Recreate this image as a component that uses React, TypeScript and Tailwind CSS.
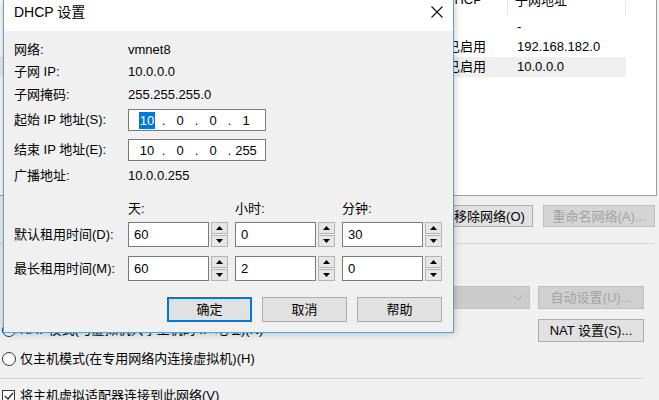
import type { ReactNode } from 'react';

const FONT = "font-['Liberation_Sans','Noto_Sans_CJK_SC',sans-serif]";

function WinButton({ children, className = '', disabled = false, primary = false }: { children: ReactNode; className?: string; disabled?: boolean; primary?: boolean }) {
    const tone = disabled
        ? 'bg-[#cccccc] border border-[#bfbfbf] text-[#8f8f8f]'
        : primary
            ? 'bg-[#e1e1e1] border-2 border-[#0078d7] text-black'
            : 'bg-[#e1e1e1] border border-[#adadad] text-black';
    return (
        <div className={`flex items-center justify-center text-[13px] leading-none ${tone} ${className}`}>
            {children}
        </div>
    );
}

function SpinArrow({ up = false }: { up?: boolean }) {
    return (
        <div className="h-[12px] border border-[#b4b4b4] bg-[#e6e6e6] flex items-center justify-center">
            <svg width="7" height="4" viewBox="0 0 7 4">
                {up ? <path d="M0 4 L3.5 0 L7 4 Z" fill="#000" /> : <path d="M0 0 L3.5 4 L7 0 Z" fill="#000" />}
            </svg>
        </div>
    );
}

function Spinner({ value, className = '' }: { value: string; className?: string }) {
    return (
        <div className={`flex h-[25px] ${className}`}>
            <div className="w-[81px] h-full border border-[#7a7a7a] bg-white pl-[5px] flex items-center text-[13px] leading-none">
                {value}
            </div>
            <div className="ml-[2px] w-[17px] flex flex-col justify-between">
                <SpinArrow up />
                <SpinArrow />
            </div>
        </div>
    );
}

function IpBox({ parts, selectFirst = false }: { parts: string[]; selectFirst?: boolean }) {
    return (
        <div className="w-[138px] h-[22px] border border-[#7a7a7a] bg-white pl-[8px] flex items-center text-[13px] leading-none">
            {parts.map((p, i) => (
                <div key={i} className="flex">
                    {i > 0 && <span className="w-[13px] text-center">.</span>}
                    <span className="w-[20px] flex justify-center">
                        {i === 0 && selectFirst ? (
                            <span className="bg-[#0078d7] text-white px-[1px] py-[2px]">{p}</span>
                        ) : (
                            p
                        )}
                    </span>
                </div>
            ))}
        </div>
    );
}

function Radio() {
    return <div className="w-[14px] h-[14px] rounded-full border border-[#333333] bg-white shrink-0" />;
}

function DhcpDialog() {
    return (
        <div className="absolute left-[3px] top-0 w-[451px] h-[333px] flex flex-col border-x border-b border-[#5fa3c0] shadow-[0_0_8px_rgba(0,0,0,0.25)]">
            {/* title bar */}
            <div className="h-[31px] bg-white flex items-start justify-between pl-[10px] pr-[10px]">
                <div className="h-[24px] flex items-center text-[14px] text-black">DHCP 设置</div>
                <div className="h-[24px] flex items-center">
                    <svg width="12" height="12" viewBox="0 0 12 12">
                        <path d="M0.5 0.5 L11.5 11.5 M11.5 0.5 L0.5 11.5" stroke="#111" strokeWidth="1.1" />
                    </svg>
                </div>
            </div>

            <div className="flex-1 bg-[#f0f0f0] px-[10px] pt-[8px] text-[13px] text-black">
                <div className="h-[22px] flex items-center">
                    <span className="w-[114px]">网络:</span>
                    <span>vmnet8</span>
                </div>
                <div className="h-[22px] flex items-center">
                    <span className="w-[114px]">子网 IP:</span>
                    <span>10.0.0.0</span>
                </div>
                <div className="h-[23px] flex items-center">
                    <span className="w-[114px]">子网掩码:</span>
                    <span>255.255.255.0</span>
                </div>
                <div className="mt-[3px] h-[22px] flex items-center">
                    <span className="w-[114px]">起始 IP 地址(S):</span>
                    <IpBox parts={['10', '0', '0', '1']} selectFirst />
                </div>
                <div className="mt-[8px] h-[22px] flex items-center">
                    <span className="w-[114px]">结束 IP 地址(E):</span>
                    <IpBox parts={['10', '0', '0', '255']} />
                </div>
                <div className="mt-[4px] h-[22px] flex items-center">
                    <span className="w-[114px]">广播地址:</span>
                    <span>10.0.0.255</span>
                </div>

                {/* lease times */}
                <div className="mt-[14px] h-[16px] flex items-center">
                    <span className="w-[114px]" />
                    <span className="w-[107px]">天:</span>
                    <span className="w-[107px]">小时:</span>
                    <span>分钟:</span>
                </div>
                <div className="mt-[5px] flex items-center">
                    <span className="w-[114px]">默认租用时间(D):</span>
                    <Spinner value="60" />
                    <Spinner value="0" className="ml-[7px]" />
                    <Spinner value="30" className="ml-[7px]" />
                </div>
                <div className="mt-[9px] flex items-center">
                    <span className="w-[114px]">最长租用时间(M):</span>
                    <Spinner value="60" />
                    <Spinner value="2" className="ml-[7px]" />
                    <Spinner value="0" className="ml-[7px]" />
                </div>

                <div className="mt-[16px] flex justify-end gap-[10px] pr-[1px]">
                    <WinButton primary className="w-[85px] h-[25px]">确定</WinButton>
                    <WinButton className="w-[85px] h-[25px]">取消</WinButton>
                    <WinButton className="w-[85px] h-[25px]">帮助</WinButton>
                </div>
            </div>
        </div>
    );
}

export default function App() {
    const rows = [
        { dhcp: '-', subnet: '-', selected: false },
        { dhcp: '已启用', subnet: '192.168.182.0', selected: false },
        { dhcp: '已启用', subnet: '10.0.0.0', selected: true },
    ];

    return (
        <div className={`relative w-[659px] h-[400px] overflow-hidden bg-[#f0f0f0] text-black ${FONT}`}>
            {/* network editor window behind */}
            <div className="flex flex-col text-[13px]">
                <div className="w-[657px] h-[196px] bg-white border-r border-b border-[#a0a0a0]">
                    <div className="grid grid-cols-[441px_67px_118px_1fr] h-[15px] overflow-hidden">
                        <div className="border-r border-[#e5e5e5]" />
                        <div className="border-r border-[#e5e5e5] pl-[4px]">
                            <span className="block -mt-[8px] leading-[16px]">DHCP</span>
                        </div>
                        <div className="border-r border-[#e5e5e5] pl-[7px]">
                            <span className="block -mt-[7px] leading-[16px]">子网地址</span>
                        </div>
                        <div />
                    </div>
                    <div className="mt-[2px]">
                        {rows.map((r, i) => (
                            <div key={i} className="grid grid-cols-[441px_67px_118px_1fr] h-[20px] items-center">
                                <div className={`h-full ${r.selected ? 'bg-[#efefef]' : ''}`} />
                                <div className={`h-full flex items-center pl-[6px] ${r.selected ? 'bg-[#efefef]' : ''}`}>{r.dhcp}</div>
                                <div className={`h-full flex items-center pl-[9px] ${r.selected ? 'bg-[#efefef]' : ''}`}>{r.subnet}</div>
                                <div />
                            </div>
                        ))}
                    </div>
                </div>

                <div className="mt-[9px] flex ml-[446px] gap-[10px]">
                    <WinButton className="w-[87px] h-[22px]">移除网络(O)</WinButton>
                    <WinButton disabled className="w-[112px] h-[22px] bg-[#d4d4d4] text-[#a3a3a3]">重命名网络(A)...</WinButton>
                </div>

                <div className="mt-[16px] w-[655px] h-px bg-[#d7d7d7]" />

                <div className="mt-[42px] flex items-center">
                    <div className="ml-[330px] w-[200px] h-[23px] bg-[#cccccc] border border-[#c4c4c4] flex items-center justify-end pr-[6px]">
                        <svg width="10" height="6" viewBox="0 0 10 6">
                            <path d="M0.5 0.5 L5 5 L9.5 0.5" stroke="#a8a8a8" strokeWidth="1" fill="none" />
                        </svg>
                    </div>
                    <WinButton disabled className="ml-[8px] w-[106px] h-[23px] bg-[#d0d0d0] text-[#a3a3a3]">自动设置(U)...</WinButton>
                </div>

                <div className="mt-[10px] h-[23px] flex">
                    <div className="self-end mb-[4px] flex items-center gap-[4px] ml-[2px] h-[16px] w-[536px]">
                        <Radio />
                        <span className="leading-[16px]">NAT 模式(与虚拟机共享主机的 IP 地址)(N)</span>
                    </div>
                    <WinButton className="w-[106px] h-[23px]">NAT 设置(S)...</WinButton>
                </div>

                <div className="mt-[9px] h-[16px] flex items-center gap-[4px] ml-[2px]">
                    <Radio />
                    <span className="leading-[16px]">仅主机模式(在专用网络内连接虚拟机)(H)</span>
                </div>

                <div className="mt-[11px] w-[643px] h-px bg-[#d0d0d0]" />

                <div className="mt-[9px] h-[16px] flex items-center gap-[5px] ml-[2px]">
                    <div className="w-[13px] h-[13px] border border-[#333333] bg-white flex items-center justify-center">
                        <svg width="10" height="8" viewBox="0 0 10 8">
                            <path d="M1 4 L4 7 L9 1" stroke="#222" strokeWidth="1.2" fill="none" />
                        </svg>
                    </div>
                    <span className="leading-[16px]">将主机虚拟适配器连接到此网络(V)</span>
                </div>
            </div>

            <DhcpDialog />
        </div>
    );
}
